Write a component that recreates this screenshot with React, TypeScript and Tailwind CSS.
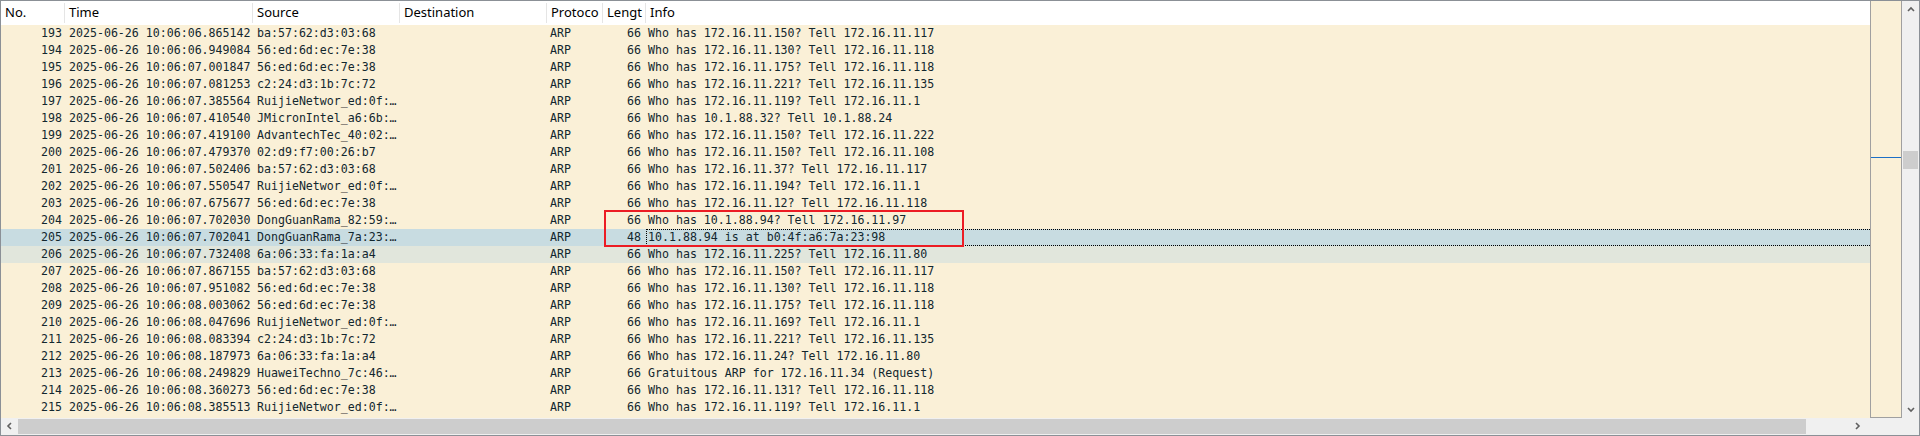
const packets = [
  ["193", "2025-06-26 10:06:06.865142", "ba:57:62:d3:03:68", "66", "Who has 172.16.11.150? Tell 172.16.11.117"],
  ["194", "2025-06-26 10:06:06.949084", "56:ed:6d:ec:7e:38", "66", "Who has 172.16.11.130? Tell 172.16.11.118"],
  ["195", "2025-06-26 10:06:07.001847", "56:ed:6d:ec:7e:38", "66", "Who has 172.16.11.175? Tell 172.16.11.118"],
  ["196", "2025-06-26 10:06:07.081253", "c2:24:d3:1b:7c:72", "66", "Who has 172.16.11.221? Tell 172.16.11.135"],
  ["197", "2025-06-26 10:06:07.385564", "RuijieNetwor_ed:0f:…", "66", "Who has 172.16.11.119? Tell 172.16.11.1"],
  ["198", "2025-06-26 10:06:07.410540", "JMicronIntel_a6:6b:…", "66", "Who has 10.1.88.32? Tell 10.1.88.24"],
  ["199", "2025-06-26 10:06:07.419100", "AdvantechTec_40:02:…", "66", "Who has 172.16.11.150? Tell 172.16.11.222"],
  ["200", "2025-06-26 10:06:07.479370", "02:d9:f7:00:26:b7", "66", "Who has 172.16.11.150? Tell 172.16.11.108"],
  ["201", "2025-06-26 10:06:07.502406", "ba:57:62:d3:03:68", "66", "Who has 172.16.11.37? Tell 172.16.11.117"],
  ["202", "2025-06-26 10:06:07.550547", "RuijieNetwor_ed:0f:…", "66", "Who has 172.16.11.194? Tell 172.16.11.1"],
  ["203", "2025-06-26 10:06:07.675677", "56:ed:6d:ec:7e:38", "66", "Who has 172.16.11.12? Tell 172.16.11.118"],
  ["204", "2025-06-26 10:06:07.702030", "DongGuanRama_82:59:…", "66", "Who has 10.1.88.94? Tell 172.16.11.97"],
  ["205", "2025-06-26 10:06:07.702041", "DongGuanRama_7a:23:…", "48", "10.1.88.94 is at b0:4f:a6:7a:23:98"],
  ["206", "2025-06-26 10:06:07.732408", "6a:06:33:fa:1a:a4", "66", "Who has 172.16.11.225? Tell 172.16.11.80"],
  ["207", "2025-06-26 10:06:07.867155", "ba:57:62:d3:03:68", "66", "Who has 172.16.11.150? Tell 172.16.11.117"],
  ["208", "2025-06-26 10:06:07.951082", "56:ed:6d:ec:7e:38", "66", "Who has 172.16.11.130? Tell 172.16.11.118"],
  ["209", "2025-06-26 10:06:08.003062", "56:ed:6d:ec:7e:38", "66", "Who has 172.16.11.175? Tell 172.16.11.118"],
  ["210", "2025-06-26 10:06:08.047696", "RuijieNetwor_ed:0f:…", "66", "Who has 172.16.11.169? Tell 172.16.11.1"],
  ["211", "2025-06-26 10:06:08.083394", "c2:24:d3:1b:7c:72", "66", "Who has 172.16.11.221? Tell 172.16.11.135"],
  ["212", "2025-06-26 10:06:08.187973", "6a:06:33:fa:1a:a4", "66", "Who has 172.16.11.24? Tell 172.16.11.80"],
  ["213", "2025-06-26 10:06:08.249829", "HuaweiTechno_7c:46:…", "66", "Gratuitous ARP for 172.16.11.34 (Request)"],
  ["214", "2025-06-26 10:06:08.360273", "56:ed:6d:ec:7e:38", "66", "Who has 172.16.11.131? Tell 172.16.11.118"],
  ["215", "2025-06-26 10:06:08.385513", "RuijieNetwor_ed:0f:…", "66", "Who has 172.16.11.119? Tell 172.16.11.1"],
];

function Chevron({ dir }: { dir: "up" | "down" | "left" | "right" }) {
  const pts = {
    up: "1,5 4,2 7,5",
    down: "1,2 4,5 7,2",
    left: "5,1 2,4 5,7",
    right: "2,1 5,4 2,7",
  }[dir];
  return (
    <svg width="8" height="8" viewBox="0 0 8 8">
      <polyline points={pts} fill="none" stroke="#606060" strokeWidth="1.6" />
    </svg>
  );
}

function HeaderCell({ w, label }: { w: string; label: string }) {
  return (
    <div className={`${w} shrink-0 overflow-hidden whitespace-nowrap border-r border-[#e5e5e5] pl-[4px]`}>
      {label}
    </div>
  );
}

function PacketRow({ p }: { p: string[] }) {
  const selected = p[0] === "205";
  const hover = p[0] === "206";
  const bg = selected ? "bg-[#c8dce1]" : hover ? "bg-[#e1e6dc]" : "bg-[#faf0d7]";
  return (
    <div className={`flex h-[17px] leading-[17px] whitespace-nowrap ${bg}`}>
      <div className="w-[64px] shrink-0 pr-[3px] text-right">{p[0]}</div>
      <div className="w-[188px] shrink-0 pl-[4px]">{p[1]}</div>
      <div className="w-[147px] shrink-0 overflow-hidden pl-[4px]">{p[2]}</div>
      <div className="w-[147px] shrink-0"></div>
      <div className="w-[56px] shrink-0 pl-[3px]">ARP</div>
      <div className="w-[43px] shrink-0 pr-[5px] text-right">{p[3]}</div>
      {selected ? (
        <div className="h-[17px] flex-1 border border-r-0 border-dotted border-black pl-[1px] leading-[15px]">{p[4]}</div>
      ) : (
        <div className="flex-1 pl-[2px]">{p[4]}</div>
      )}
    </div>
  );
}

export default function App() {
  return (
    <div className="relative flex h-[436px] w-[1920px] flex-col overflow-hidden border border-[#8b9096] bg-[#f0f0f0]">
      <div className="flex h-[417px] shrink-0">
        <div className="flex w-[1869px] shrink-0 flex-col overflow-hidden">
          <div className="flex h-[24px] shrink-0 items-center bg-white font-['Noto_Sans',sans-serif] text-[13px] text-black">
            <HeaderCell w="w-[64px]" label="No." />
            <HeaderCell w="w-[188px]" label="Time" />
            <HeaderCell w="w-[147px]" label="Source" />
            <HeaderCell w="w-[147px]" label="Destination" />
            <HeaderCell w="w-[56px]" label="Protoco" />
            <HeaderCell w="w-[43px]" label="Lengt" />
            <div className="flex-1 pl-[4px]">Info</div>
          </div>
          <div className="flex-1 bg-[#faf0d7] font-['DejaVu_Sans_Mono',monospace] text-[11.6px] text-[#12272e]">
            {packets.map((p) => (
              <PacketRow key={p[0]} p={p} />
            ))}
          </div>
        </div>
        <div className="relative w-[32px] shrink-0 border-x border-b border-[#a0a0a0] bg-[#faf0d7]">
          <div className="absolute left-0 right-0 top-[156px] h-[1px] bg-[#1c6fc6]"></div>
        </div>
        <div className="flex w-[17px] shrink-0 flex-col items-center">
          <div className="flex h-[17px] items-center justify-center">
            <Chevron dir="up" />
          </div>
          <div className="flex-1 pt-[133px]">
            <div className="h-[18px] w-[15px] bg-[#cdcdcd]"></div>
          </div>
          <div className="flex h-[17px] items-center justify-center">
            <Chevron dir="down" />
          </div>
        </div>
      </div>
      <div className="flex h-[16px] shrink-0 items-center">
        <div className="flex w-[17px] justify-center">
          <Chevron dir="left" />
        </div>
        <div className="h-[15px] w-[1788px] bg-[#cdcdcd]"></div>
        <div className="flex w-[60px] justify-end pr-[4px]">
          <Chevron dir="right" />
        </div>
      </div>
      <div className="absolute left-[603px] top-[209px] h-[37px] w-[360px] border-2 border-[#ec1c24]"></div>
    </div>
  );
}
